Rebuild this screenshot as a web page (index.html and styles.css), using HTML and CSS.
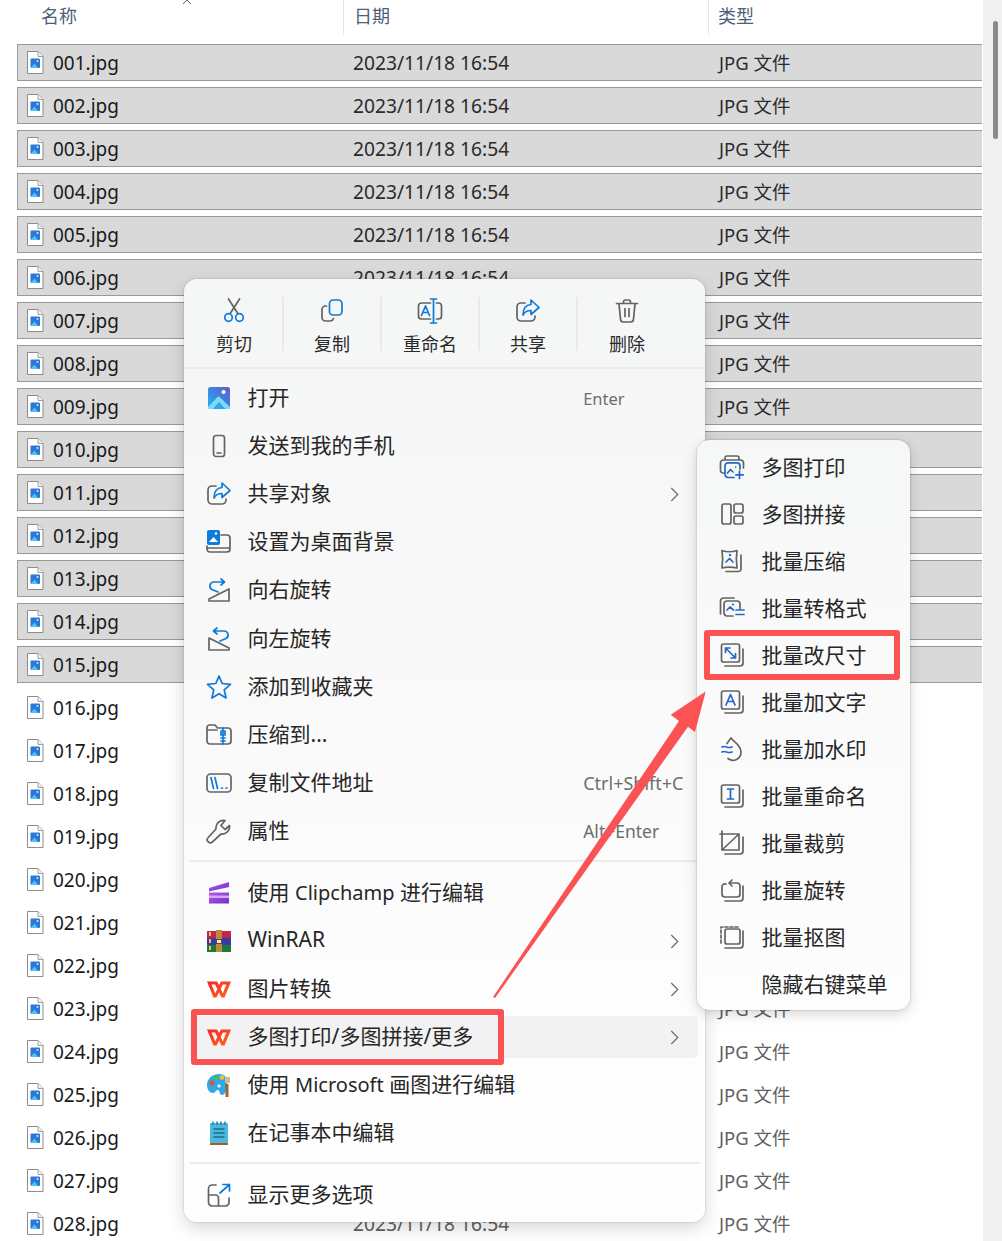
FILE: index.html
```html
<!DOCTYPE html>
<html lang="zh-CN">
<head>
<meta charset="utf-8">
<title>文件列表</title>
<link rel="stylesheet" href="styles.css">
</head>
<body>
<svg class="defs" width="0" height="0" aria-hidden="true">
  <defs>
    <linearGradient id="gOpen" x1="0" y1="1" x2="1" y2="0"><stop offset="0" stop-color="#1fb8f0"/><stop offset=".55" stop-color="#3f7fe0"/><stop offset="1" stop-color="#6a5cc0"/></linearGradient>
    <linearGradient id="gWps" x1="0" y1="0" x2="1" y2="1"><stop offset="0" stop-color="#f5232a"/><stop offset="1" stop-color="#ff6a1a"/></linearGradient>
    <linearGradient id="gClip" x1="0" y1="0" x2="1" y2="1"><stop offset="0" stop-color="#b45ae8"/><stop offset="1" stop-color="#6f2fd0"/></linearGradient>
    <symbol id="file" viewBox="0 0 18 23">
      <path d="M1.5.5H12L17 5.5V22.500H1.500Z" fill="#fff" stroke="#8c8c8c"/>
      <path d="M12 .5V5.500H17" fill="#f2f2f2" stroke="#a0a0a0"/>
      <rect x="4.500" y="7.500" width="9.500" height="9.500" rx="1" fill="#2b78d8"/>
      <path d="M4.500 17L8.500 12.500L12 17Z" fill="#4fc3f7"/>
      <circle cx="11.500" cy="10" r="1" fill="#cfe8ff"/>
    </symbol>
    <symbol id="wps" viewBox="0 0 26 26">
      <path d="M1 5.500H11L13 9L15 5.500H25L18.500 21.500H15.500L13 16.500L10.500 21.500H7.500ZM5.500 8.500L9.200 17.500L11.300 13L9.200 8.500ZM16.800 8.500L14.700 13L16.800 17.500L20.500 8.500Z" fill="url(#gWps)" fill-rule="evenodd"/>
    </symbol>
  </defs>
</svg>

<main class="explorer">
  <section class="list">
    <header class="head">
      <svg class="sort" width="10" height="4" viewBox="0 0 10 4"><path d="M1 4L5 0L9 4" fill="none" stroke="#666"/></svg>
      <div class="hcell hname">名称</div>
      <div class="hcell hdate">日期</div>
      <div class="hcell htype">类型</div>
    </header>
    <div class="rows">
      <div class="row sel"><span class="name"><svg class="ficon"><use href="#file"/></svg>001.jpg</span><span class="date">2023/11/18 16:54</span><span class="type">JPG 文件</span></div>
      <div class="row sel"><span class="name"><svg class="ficon"><use href="#file"/></svg>002.jpg</span><span class="date">2023/11/18 16:54</span><span class="type">JPG 文件</span></div>
      <div class="row sel"><span class="name"><svg class="ficon"><use href="#file"/></svg>003.jpg</span><span class="date">2023/11/18 16:54</span><span class="type">JPG 文件</span></div>
      <div class="row sel"><span class="name"><svg class="ficon"><use href="#file"/></svg>004.jpg</span><span class="date">2023/11/18 16:54</span><span class="type">JPG 文件</span></div>
      <div class="row sel"><span class="name"><svg class="ficon"><use href="#file"/></svg>005.jpg</span><span class="date">2023/11/18 16:54</span><span class="type">JPG 文件</span></div>
      <div class="row sel"><span class="name"><svg class="ficon"><use href="#file"/></svg>006.jpg</span><span class="date">2023/11/18 16:54</span><span class="type">JPG 文件</span></div>
      <div class="row sel"><span class="name"><svg class="ficon"><use href="#file"/></svg>007.jpg</span><span class="date">2023/11/18 16:54</span><span class="type">JPG 文件</span></div>
      <div class="row sel"><span class="name"><svg class="ficon"><use href="#file"/></svg>008.jpg</span><span class="date">2023/11/18 16:54</span><span class="type">JPG 文件</span></div>
      <div class="row sel"><span class="name"><svg class="ficon"><use href="#file"/></svg>009.jpg</span><span class="date">2023/11/18 16:54</span><span class="type">JPG 文件</span></div>
      <div class="row sel"><span class="name"><svg class="ficon"><use href="#file"/></svg>010.jpg</span><span class="date">2023/11/18 16:54</span><span class="type">JPG 文件</span></div>
      <div class="row sel"><span class="name"><svg class="ficon"><use href="#file"/></svg>011.jpg</span><span class="date">2023/11/18 16:54</span><span class="type">JPG 文件</span></div>
      <div class="row sel"><span class="name"><svg class="ficon"><use href="#file"/></svg>012.jpg</span><span class="date">2023/11/18 16:54</span><span class="type">JPG 文件</span></div>
      <div class="row sel"><span class="name"><svg class="ficon"><use href="#file"/></svg>013.jpg</span><span class="date">2023/11/18 16:54</span><span class="type">JPG 文件</span></div>
      <div class="row sel"><span class="name"><svg class="ficon"><use href="#file"/></svg>014.jpg</span><span class="date">2023/11/18 16:54</span><span class="type">JPG 文件</span></div>
      <div class="row sel"><span class="name"><svg class="ficon"><use href="#file"/></svg>015.jpg</span><span class="date">2023/11/18 16:54</span><span class="type">JPG 文件</span></div>
      <div class="row"><span class="name"><svg class="ficon"><use href="#file"/></svg>016.jpg</span><span class="date">2023/11/18 16:54</span><span class="type">JPG 文件</span></div>
      <div class="row"><span class="name"><svg class="ficon"><use href="#file"/></svg>017.jpg</span><span class="date">2023/11/18 16:54</span><span class="type">JPG 文件</span></div>
      <div class="row"><span class="name"><svg class="ficon"><use href="#file"/></svg>018.jpg</span><span class="date">2023/11/18 16:54</span><span class="type">JPG 文件</span></div>
      <div class="row"><span class="name"><svg class="ficon"><use href="#file"/></svg>019.jpg</span><span class="date">2023/11/18 16:54</span><span class="type">JPG 文件</span></div>
      <div class="row"><span class="name"><svg class="ficon"><use href="#file"/></svg>020.jpg</span><span class="date">2023/11/18 16:54</span><span class="type">JPG 文件</span></div>
      <div class="row"><span class="name"><svg class="ficon"><use href="#file"/></svg>021.jpg</span><span class="date">2023/11/18 16:54</span><span class="type">JPG 文件</span></div>
      <div class="row"><span class="name"><svg class="ficon"><use href="#file"/></svg>022.jpg</span><span class="date">2023/11/18 16:54</span><span class="type">JPG 文件</span></div>
      <div class="row"><span class="name"><svg class="ficon"><use href="#file"/></svg>023.jpg</span><span class="date">2023/11/18 16:54</span><span class="type">JPG 文件</span></div>
      <div class="row"><span class="name"><svg class="ficon"><use href="#file"/></svg>024.jpg</span><span class="date">2023/11/18 16:54</span><span class="type">JPG 文件</span></div>
      <div class="row"><span class="name"><svg class="ficon"><use href="#file"/></svg>025.jpg</span><span class="date">2023/11/18 16:54</span><span class="type">JPG 文件</span></div>
      <div class="row"><span class="name"><svg class="ficon"><use href="#file"/></svg>026.jpg</span><span class="date">2023/11/18 16:54</span><span class="type">JPG 文件</span></div>
      <div class="row"><span class="name"><svg class="ficon"><use href="#file"/></svg>027.jpg</span><span class="date">2023/11/18 16:54</span><span class="type">JPG 文件</span></div>
      <div class="row"><span class="name"><svg class="ficon"><use href="#file"/></svg>028.jpg</span><span class="date">2023/11/18 16:54</span><span class="type">JPG 文件</span></div>
    </div>
  </section>
  <aside class="scrollbar"><div class="thumb"></div></aside>
</main>

<nav class="menu">
  <div class="toolbar">
    <div class="tool"><svg class="ic" viewBox="0 0 26 26"><path d="M7.500 1L16.500 15M18.500 1L9.500 15" class="g"/><circle cx="7.500" cy="19.500" r="3.800" class="b"/><circle cx="18.500" cy="19.500" r="3.800" class="b"/></svg><span>剪切</span></div>
    <div class="tool"><svg class="ic" viewBox="0 0 26 26"><rect x="10.500" y="2" width="12.500" height="15" rx="3.500" class="b"/><path d="M7.500 8H6.500A3.500 3.500 0 0 0 3 11.500V19.500A3.500 3.500 0 0 0 6.500 23H11.500A3.500 3.500 0 0 0 14.500 20.500" class="g"/></svg><span>复制</span></div>
    <div class="tool"><svg class="ic" viewBox="0 0 26 26"><path d="M13.500 5H4.500A3 3 0 0 0 1.500 8V18A3 3 0 0 0 4.500 21H13.500M19.500 5H21.500A3 3 0 0 1 24.500 8V18A3 3 0 0 1 21.500 21H19.500" class="g"/><path d="M16.500 1.500V24.500M13.500 1H19.500M13.500 25H19.500" class="b"/><path d="M4.500 17.500L8.500 8L12.500 17.500M5.800 14.500H11.200" class="b"/></svg><span>重命名</span></div>
    <div class="tool"><svg class="ic" viewBox="0 0 26 26"><path d="M10 5H6A4 4 0 0 0 2 9V19A4 4 0 0 0 6 23H16A4 4 0 0 0 20 19V18" class="g"/><path d="M16 2L24 9.500L16 16.500V12.500C12 12.500 9.500 14 8 17C8 11 11 7 16 6.500Z" class="b" stroke-linejoin="round"/></svg><span>共享</span></div>
    <div class="tool last"><svg class="ic" viewBox="0 0 26 26"><path d="M2.500 5.500H23.500M9.500 5V4A2 2 0 0 1 11.500 2H14.500A2 2 0 0 1 16.500 4V5M5 6L6.500 21A3 3 0 0 0 9.500 24H16.500A3 3 0 0 0 19.500 21L21 6M11 10.500V18.500M15 10.500V18.500" class="g"/></svg><span>删除</span></div>
  </div>

  <div class="group first">
    <div class="item"><svg class="ic" viewBox="0 0 26 26"><rect x="2" y="2" width="22" height="22" rx="2.500" fill="url(#gOpen)"/><path d="M2 22L12.500 11L24 22V24H2Z" fill="#7ed9f7"/><path d="M7 24L13 17L19.500 24Z" fill="#28a9ea"/><circle cx="17.500" cy="7" r="2" fill="#fff"/></svg><span>打开</span><em class="k-enter">Enter</em></div>
    <div class="item"><svg class="ic" viewBox="0 0 26 26"><rect x="7.500" y="2.500" width="11" height="21" rx="2.500" class="g"/><path d="M11 20H15" class="g"/></svg><span>发送到我的手机</span></div>
    <div class="item"><svg class="ic" viewBox="0 0 26 26"><path d="M10 5H6A4 4 0 0 0 2 9V19A4 4 0 0 0 6 23H16A4 4 0 0 0 20 19V18" class="g"/><path d="M16 2L24 9.500L16 16.500V12.500C12 12.500 9.500 14 8 17C8 11 11 7 16 6.500Z" class="b" stroke-linejoin="round"/></svg><span>共享对象</span><svg class="chev" viewBox="0 0 8 14"><path d="M1 1L7 7L1 13"/></svg></div>
    <div class="item"><svg class="ic" viewBox="0 0 26 26"><path d="M15 6H21A3 3 0 0 1 24 9V20A3 3 0 0 1 21 23H4A3 3 0 0 1 1 20V17M1 19H24" class="g"/><rect x="1" y="1" width="13" height="15" rx="2" fill="#0f7ad8"/><path d="M3 13L7.500 8L12 13Z" fill="#fff"/><circle cx="10" cy="4.500" r="1.300" fill="#fff"/></svg><span>设置为桌面背景</span></div>
    <div class="item"><svg class="ic" viewBox="0 0 26 26"><path d="M3 24V22L23 12V24Z" class="g"/><path d="M15 2L18.500 5L15 8M18 5H8A4 4 0 0 0 6 12.500L12 15" class="b"/></svg><span>向右旋转</span></div>
    <div class="item"><svg class="ic" viewBox="0 0 26 26"><path d="M3 12L23 22V24H3Z" class="g"/><path d="M11 2L7.500 5L11 8M8 5H18A4 4 0 0 1 20 12.500L14 15" class="b"/></svg><span>向左旋转</span></div>
    <div class="item"><svg class="ic" viewBox="0 0 26 26"><path d="M13 2L16.200 9.500L24.500 10.300L18.200 15.800L20.100 24L13 19.700L5.900 24L7.800 15.800L1.500 10.300L9.800 9.500Z" class="b" stroke-linejoin="round"/></svg><span>添加到收藏夹</span></div>
    <div class="item"><svg class="ic" viewBox="0 0 26 26"><path d="M1 5.500A2.500 2.500 0 0 1 3.500 3H9L11.500 6H22A3 3 0 0 1 25 9V19A3 3 0 0 1 22 22H4A3 3 0 0 1 1 19ZM1 8H11" class="g"/><path d="M17 6V22M15 9H19V13H15ZM15 16H19M15 19H19" class="b"/></svg><span>压缩到...</span></div>
    <div class="item"><svg class="ic" viewBox="0 0 26 26"><rect x="1" y="4" width="24" height="18" rx="3.500" class="g"/><path d="M5 7.500L7.500 18.500M9 7.500L11.500 18.500M15.500 18H16.500M20 18H21" class="b"/></svg><span>复制文件地址</span><em class="k-ctrl">Ctrl+Shift+C</em></div>
    <div class="item"><svg class="ic" viewBox="0 0 26 26"><path d="M23.500 7.500L19 11.500L15 7.500L19 2.500A7.500 7.500 0 0 0 10 11L2.200 19.500A3 3 0 0 0 6.500 23.800L15 16A7.500 7.500 0 0 0 23.500 7.500Z" class="g" stroke-linejoin="round"/></svg><span>属性</span><em>Alt+Enter</em></div>
  </div>
  <div class="divider"></div>
  <div class="group">
    <div class="item"><svg class="ic" viewBox="0 0 26 26"><path d="M3 8L23 2V7L3 11.500Z" fill="url(#gClip)"/><rect x="3" y="12.500" width="20" height="11" fill="url(#gClip)"/><rect x="3" y="15.500" width="20" height="2.500" fill="#d9a5f5"/></svg><span>使用 <b class="latin">Clipchamp</b> 进行编辑</span></div>
    <div class="item"><svg class="ic" viewBox="0 0 26 26"><rect x="1" y="3" width="24" height="7" fill="#c0264f"/><rect x="1" y="10" width="24" height="7" fill="#3a3aa0"/><rect x="1" y="17" width="24" height="7" fill="#1d7a3d"/><path d="M4 4V8M4 11V15M4 18V22" stroke="#f5c542" stroke-width="2"/><rect x="10" y="2" width="6" height="22" fill="#c08a3c"/><rect x="10.500" y="11.500" width="5" height="4" fill="#f4e9d0" stroke="#333" stroke-width=".8"/></svg><span>WinRAR</span><svg class="chev" viewBox="0 0 8 14"><path d="M1 1L7 7L1 13"/></svg></div>
    <div class="item"><svg class="ic"><use href="#wps"/></svg><span>图片转换</span><svg class="chev" viewBox="0 0 8 14"><path d="M1 1L7 7L1 13"/></svg></div>
    <div class="item hover"><svg class="ic"><use href="#wps"/></svg><span>多图打印/多图拼接/更多</span><svg class="chev" viewBox="0 0 8 14"><path d="M1 1L7 7L1 13"/></svg></div>
    <div class="item"><svg class="ic" viewBox="0 0 26 26"><path d="M13 2C6 2 1 7 1 13C1 18 4 21 7 21C10 21 9 18 12 18C14 18 13 23 16 23C19 23 21 19 21 12C23 7 19 2 13 2Z" fill="#2fa8ea"/><circle cx="6" cy="11" r="2.500" fill="#e2552d"/><circle cx="10" cy="6" r="2.300" fill="#57b947"/><circle cx="16" cy="5.500" r="2.300" fill="#f2c230"/><path d="M11 14H15M13 12V16" stroke="#fff" stroke-width="1"/><path d="M21 12V25" stroke="#a0642a" stroke-width="3"/><path d="M19 5H24V11H19Z" fill="#d9b98a"/></svg><span>使用 <b class="latin">Microsoft</b> 画图进行编辑</span></div>
    <div class="item"><svg class="ic" viewBox="0 0 26 26"><rect x="4" y="3" width="18" height="20" rx="1" fill="#4db8dd"/><rect x="4" y="23" width="18" height="2" fill="#a0622c"/><path d="M7 1.500V5M11 1.500V5M15 1.500V5M19 1.500V5" stroke="#2a7ea0" stroke-width="1.500"/><path d="M7.500 9H18.500M7.500 13H18.500M7.500 17H18.500" stroke="#1f6a90" stroke-width="1.500"/></svg><span>在记事本中编辑</span></div>
  </div>
  <div class="divider"></div>
  <div class="group">
    <div class="item"><svg class="ic" viewBox="0 0 26 26"><path d="M10 3H6A3.500 3.500 0 0 0 2.500 6.500V20.500A3.500 3.500 0 0 0 6 24H19.500A3.500 3.500 0 0 0 23 20.500V16M2.500 13H9.500A3 3 0 0 1 12.500 16V24" class="g"/><path d="M14 11L23.500 2.500M17 2.500H23.500V9" class="b"/></svg><span>显示更多选项</span></div>
  </div>
</nav>

<nav class="submenu">
  <div class="sub"><svg class="ic" viewBox="0 0 26 26"><path d="M6 6V4A2 2 0 0 1 8 2H18A2 2 0 0 1 20 4V6M4.500 19H4A2.500 2.500 0 0 1 1.500 16.500V9A3 3 0 0 1 4.500 6H21.500A3 3 0 0 1 24.500 9V14" class="g"/><path d="M15 23.500H9A3 3 0 0 1 6 20.500V11.800A3 3 0 0 1 9 8.800H18A3 3 0 0 1 21 11.800V15M8.500 19L11.500 15.500L14 18M16.500 13H16.600M20.500 17V24.500M16.800 20.800H24.200" class="bd"/></svg><span>多图打印</span></div>
  <div class="sub"><svg class="ic" viewBox="0 0 26 26"><rect x="3" y="3" width="9" height="20" rx="2" class="g"/><rect x="15" y="3" width="9" height="9" rx="2" class="g"/><rect x="15" y="15" width="9" height="8" rx="2" class="g"/></svg><span>多图拼接</span></div>
  <div class="sub"><svg class="ic" viewBox="0 0 26 26"><path d="M3 2.500C7 4 13 4 18 2.500C17 9 17 13 18 20C13 19 7 19 3 20C4 13 4 9 3 2.500Z" class="g"/><path d="M22 7V21A2.500 2.500 0 0 1 19.500 23.500H7" class="g"/><path d="M7 14L10.500 10.500L14 14" class="bd"/><circle cx="11" cy="7" r="1.200" fill="#2566c8"/></svg><span>批量压缩</span></div>
  <div class="sub"><svg class="ic" viewBox="0 0 26 26"><path d="M1.500 19V6A3 3 0 0 1 4.500 3H15" class="g"/><path d="M14 21H8A3 3 0 0 1 5 18V9A3 3 0 0 1 8 6H18A3 3 0 0 1 21 9V14" class="g"/><path d="M8 15L11 12L14.500 15M17 15H25M17 19.500H25" class="bd"/><circle cx="14" cy="9.500" r="1.100" fill="#2566c8"/></svg><span>批量转格式</span></div>
  <div class="sub"><svg class="ic" viewBox="0 0 26 26"><rect x="2.500" y="2" width="18" height="18" rx="2" class="g"/><path d="M24 7V21A3 3 0 0 1 21 24H6" class="g"/><path d="M6.500 6L16.500 16M6.500 10.500V6H11M16.500 11.500V16H12" class="bd"/></svg><span>批量改尺寸</span></div>
  <div class="sub"><svg class="ic" viewBox="0 0 26 26"><rect x="2.500" y="2" width="18" height="18" rx="2" class="g"/><path d="M24 7V21A3 3 0 0 1 21 24H6" class="g"/><path d="M7 16L11.500 5.500L16 16M8.500 12.500H14.500" class="bd"/></svg><span>批量加文字</span></div>
  <div class="sub"><svg class="ic" viewBox="0 0 26 26"><path d="M12 2C15 6 22 9 22 16A8 8 0 0 1 9 22.500M8 7.500C9 6 10.500 4 12 2" class="g"/><path d="M3 11C6 9 9 13 13 11M3 16C6 14 9 18 13 16" class="bd"/></svg><span>批量加水印</span></div>
  <div class="sub"><svg class="ic" viewBox="0 0 26 26"><rect x="2.500" y="2" width="18" height="18" rx="2" class="g"/><path d="M24 7V21A3 3 0 0 1 21 24H6" class="g"/><path d="M11.500 6V16M8.500 6H14.500M8.500 16H14.500" class="bd"/></svg><span>批量重命名</span></div>
  <div class="sub"><svg class="ic" viewBox="0 0 26 26"><path d="M3 1V20H20V4H1M3 20L20 4" class="g"/><path d="M24 7V21A3 3 0 0 1 21 24H6" class="g"/></svg><span>批量裁剪</span></div>
  <div class="sub"><svg class="ic" viewBox="0 0 26 26"><path d="M12 6H18A3 3 0 0 1 21 9V17M7 7A3 3 0 0 0 3 10V17A3 3 0 0 0 6 20H18A3 3 0 0 0 21 17M13 3L10 6L13 9M24 9V21A3 3 0 0 1 21 24H6" class="g"/></svg><span>批量旋转</span></div>
  <div class="sub"><svg class="ic" viewBox="0 0 26 26"><rect x="6" y="5" width="15" height="15" rx="2" class="g"/><path d="M24 7V21A3 3 0 0 1 21 24H6" class="g"/><path d="M2 19V3H19" class="g" stroke-dasharray="3 2"/></svg><span>批量抠图</span></div>
  <div class="sub"><i class="ic"></i><span>隐藏右键菜单</span></div>
</nav>

<div class="mark mark-a"></div>
<div class="mark mark-b"></div>
<svg class="arrow" viewBox="0 0 1002 1241"><polygon points="705.700,691.500 695,732 688,726.700 495,998 493,997 679,721 670.700,714.700"/></svg>
</body>
</html>
```

FILE: styles.css
```css
* { box-sizing: border-box; }
html, body { margin: 0; height: 100%; }
body {
  position: relative;
  width: 1002px;
  height: 1241px;
  overflow: hidden;
  background: #fff;
  font-family: "Noto Sans", "Noto Sans CJK SC", sans-serif;
  color: #262626;
}
.defs { position: absolute; }

.explorer { display: flex; height: 1241px; }
.list { flex: 0 0 983px; overflow: hidden; }
.scrollbar { flex: 1; background: #f0f0f0; padding: 21px 4px 0 10px; }
.thumb { height: 118px; background: #8a8a8a; border-radius: 3px; }

.head {
  position: relative;
  display: grid;
  grid-template-columns: 343px 365px 1fr;
  height: 44px;
  font-size: 18px;
  color: #4d6079;
}
.sort { position: absolute; left: 182px; top: 0; }
.hcell { height: 35px; line-height: 32px; }
.hname { padding-left: 41px; }
.hdate { padding-left: 10px; border-left: 1px solid #e5e5e5; }
.htype { padding-left: 9px; border-left: 1px solid #e5e5e5; }

.rows { display: flex; flex-direction: column; gap: 6px; margin: 0 1px 0 17px; }
.row {
  display: grid;
  grid-template-columns: 336px 365px 1fr;
  align-items: center;
  height: 37px;
  flex: none;
  font-size: 19.200px;
  border: 1px solid transparent;
  border-right: 0;
  color: #606060;
}
.row.sel { background: #d9d9d9; border-color: #999; color: #2a2a2a; }
.name { display: flex; align-items: center; color: #1a1a1a; margin-left: -1px; padding-left: 9px; font-size: 19px; }
.ficon { width: 18px; height: 23px; margin-right: 9px; flex: none; }
.date { margin-left: -1px; }
.type { font-size: 18.500px; padding-bottom: 2px; }

.menu {
  position: absolute;
  left: 184px;
  top: 279px;
  width: 521px;
  height: 943px;
  border-radius: 13px;
  background: linear-gradient(180deg, #f5f6f6 0%, #f8f8f8 35%, #fdfdfd 75%, #fefefe 100%);
  box-shadow: 0 0 2px rgba(0,0,0,.25), 0 6px 18px rgba(0,0,0,.16);
}
.toolbar {
  display: flex;
  height: 90px;
  padding: 18px 0 0 2px;
  border-bottom: 2px solid #ebebeb;
}
.tool {
  width: 98px;
  height: 54px;
  padding-top: 1px;
  display: flex;
  flex-direction: column;
  align-items: center;
  gap: 8px;
  border-right: 2px solid #e9e9e9;
  font-size: 18px;
  line-height: 24px;
  color: #2a2a2a;
}
.tool.last { border-right: 0; }
.ic { width: 26px; height: 26px; flex: none; display: block; }
.g, .b, .bd { fill: none; stroke-width: 1.700; stroke-linecap: round; stroke-linejoin: round; }
.g { stroke: #636363; }
.b { stroke: #0f7ad8; }
.bd { stroke: #2566c8; }

.group { padding: 0 0 0 6px; }
.group.first { padding-top: 5px; }
.item {
  display: grid;
  grid-template-columns: 26px 320px auto;
  column-gap: 15.600px;
  align-items: center;
  width: 508px;
  height: 48.100px;
  padding: 0 18px 0 16px;
  font-size: 21px;
  border-radius: 5px;
}
.item em { font-style: normal; font-size: 17.500px; color: #6d6d6d; white-space: nowrap; }
.item em.k-enter { font-size: 16.500px; }
.item em.k-ctrl { font-size: 18px; }
.item.hover { height: 42px; margin: 3px 0; background: #f2f2f2; }
.chev { width: 9px; height: 15px; justify-self: end; margin-right: 1px; fill: none; stroke: #707070; stroke-width: 1.200; }
.item > span { white-space: nowrap; padding-bottom: 4px; }
.latin { font-weight: 400; font-size: 20px; }
.divider { height: 2px; margin: 5px 5px 7px 6px; background: #ebebeb; }

.submenu {
  position: absolute;
  left: 697px;
  top: 440px;
  width: 213px;
  height: 570px;
  padding-top: 3px;
  border-radius: 13px;
  background: linear-gradient(180deg, #f6f7f7 0%, #fbfbfb 60%, #fdfdfd 100%);
  box-shadow: 0 0 2px rgba(0,0,0,.3), 0 4px 14px rgba(0,0,0,.16);
}
.sub {
  display: flex;
  align-items: center;
  gap: 16.600px;
  height: 47px;
  padding-left: 22px;
  font-size: 21px;
  white-space: nowrap;
}
.sub > span { padding-bottom: 2px; }

.mark { position: absolute; border: 6px solid #fb5353; border-radius: 3px; }
.mark-a { left: 191px; top: 1009px; width: 313px; height: 56px; }
.mark-b { left: 704px; top: 630px; width: 196px; height: 50px; }
.arrow { position: absolute; left: 0; top: 0; width: 1002px; height: 1241px; pointer-events: none; }
.arrow polygon { fill: #fb5353; }
```
